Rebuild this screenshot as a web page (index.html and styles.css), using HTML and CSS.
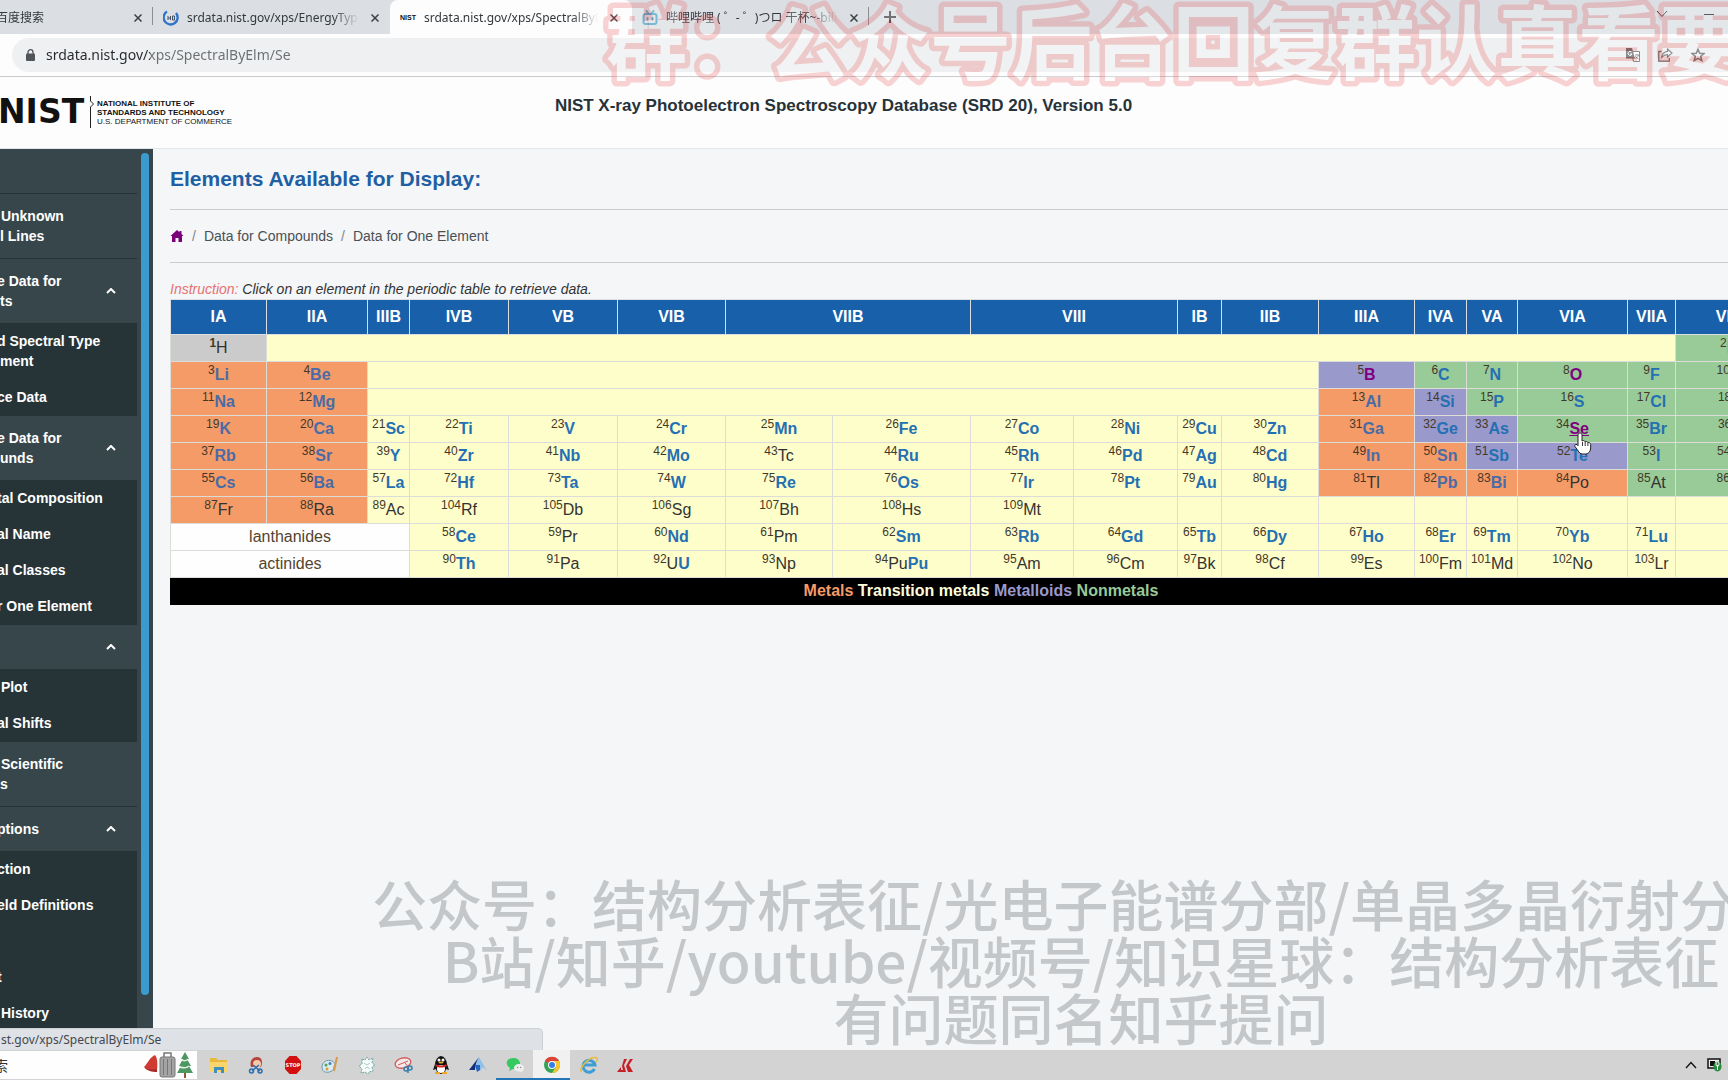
FILE: index.html
```html
<!DOCTYPE html>
<html lang="en">
<head>
<meta charset="utf-8">
<title>NIST X-ray Photoelectron Spectroscopy Database</title>
<link rel="stylesheet" href="styles.css">
</head>
<body>
<div class="tabs">
  <div class="tab tab-first"><button class="tab-title">百度搜索</button><button class="close" aria-label="Close tab"><svg viewBox="0 0 8 8"><path d="M0.5 0.5l7 7M7.5 0.5l-7 7"/></svg></button></div>
  <div class="tab"><svg class="favicon" viewBox="0 0 16 16"><path d="M4 1.5A7 7 0 1 0 13 3" fill="none" stroke="#2f74c8" stroke-width="2.4"/><path d="M5 6v4M5 8h2M7.500 6v4M9.500 6v4h2v-4h-2" fill="none" stroke="#44536a"/></svg><button class="tab-title">srdata.nist.gov/xps/EnergyType</button><button class="close" aria-label="Close tab"><svg viewBox="0 0 8 8"><path d="M0.5 0.5l7 7M7.5 0.5l-7 7"/></svg></button></div>
  <div class="tab active"><span class="favicon mini">NIST</span><button class="tab-title">srdata.nist.gov/xps/SpectralByElm</button><button class="close" aria-label="Close tab"><svg viewBox="0 0 8 8"><path d="M0.5 0.5l7 7M7.5 0.5l-7 7"/></svg></button></div>
  <div class="tab last"><svg class="favicon" viewBox="0 0 16 16"><g fill="none" stroke="#4ba3c7" stroke-width="2" stroke-linecap="round"><rect x="1.500" y="4" width="13" height="10" rx="2"/><path d="M4.500 1l2 2.500M11.500 1l-2 2.500M5.500 8v1.500M10.500 8v1.500"/></g></svg><button class="tab-title">哔哩哔哩 ( ゜- ゜)つロ 干杯~-bili</button><button class="close" aria-label="Close tab"><svg viewBox="0 0 8 8"><path d="M0.5 0.5l7 7M7.5 0.5l-7 7"/></svg></button></div>
  <button class="new-tab" aria-label="New tab"><svg width="12" height="12" viewBox="0 0 12 12"><path d="M6 0v12M0 6h12" stroke="#444" stroke-width="2"/></svg></button>
  <div class="window-controls">
    <button aria-label="Search tabs"><svg width="12" height="8" viewBox="0 0 12 8"><path d="M1 1l5 5.500L11 1" fill="none" stroke="#333"/></svg></button>
    <button aria-label="Minimize"><svg width="10" height="8" viewBox="0 0 10 8"><path d="M0 4.500h10" stroke="#222"/></svg></button>
  </div>
</div>
<div class="toolbar">
  <div class="omnibox">
    <svg width="9" height="12" viewBox="0 0 9 12"><rect y="4.500" width="9" height="7.500" rx="1" fill="#50555a"/><path d="M2 5V3.200a2.500 2.500 0 0 1 5 0V5" fill="none" stroke="#50555a" stroke-width="1.300"/></svg>
    <input class="address" aria-label="Address" value="srdata.nist.gov/xps/SpectralByElm/Se">
    <div class="page-actions">
      <button aria-label="Translate"><svg width="14" height="14" viewBox="0 0 14 14"><path d="M5.500 3.500h8v10h-6z" fill="#fff" stroke="#666"/><path d="M0 0h6l3 10.500H0z" fill="#666"/><path d="M5.500 4A2 2 0 1 0 6 6H4" fill="none" stroke="#fff"/><path d="M9 7h4M11 6v1M12.500 7c-.5 2-2 3-3 3.500M9.500 8c.5 1.500 2 2.500 3 3" fill="none" stroke="#666" stroke-width=".8"/></svg></button>
      <button aria-label="Share"><svg width="15" height="14" viewBox="0 0 15 14"><path d="M3.500 3.500H.8v9.700h10.500V10" fill="none" stroke="#666" stroke-width="1.300"/><path d="M9.500 1l4.500 4-4.500 4V6.600C6.500 6.500 5 7.700 3.500 9.500 4 6 6 3.800 9.500 3.400z" fill="none" stroke="#666" stroke-width="1.100"/></svg></button>
      <button aria-label="Bookmark"><svg width="14" height="14" viewBox="0 0 14 14"><path d="M7 1.200l1.700 4 4.300.3-3.300 2.800 1.100 4.300L7 10.300l-3.800 2.300 1.100-4.300L1 5.500l4.300-.3z" fill="none" stroke="#666" stroke-width="1.500"/></svg></button>
    </div>
  </div>
</div>
<header class="site-header">
  <a class="logo" href="#"><span class="wordmark">NIST</span><svg width="6" height="32" viewBox="0 0 6 32"><path d="M1.500 0v5l3 3-3 3v21" fill="none" stroke="#222"/></svg><span class="agency"><b>NATIONAL INSTITUTE OF</b><b>STANDARDS AND TECHNOLOGY</b><span>U.S. DEPARTMENT OF COMMERCE</span></span></a>
  <h1>NIST X-ray Photoelectron Spectroscopy Database (SRD 20), Version 5.0</h1>
</header>
<div class="page">
  <aside class="sidebar">
    <nav class="menu">
      <a class="item" href="#">&nbsp;</a>
      <a class="item" href="#">&nbsp;Unknown<br>l Lines</a>
      <button class="item group"><span>e Data for<br>ts</span><svg viewBox="0 0 10 6"><path d="M1 5l4-4 4 4"/></svg></button>
      <div class="sub"><a href="#">d Spectral Type<br>ment</a><a href="#">ce Data</a></div>
      <button class="item group"><span>e Data for<br>unds</span><svg viewBox="0 0 10 6"><path d="M1 5l4-4 4 4"/></svg></button>
      <div class="sub"><a href="#">tal Composition</a><a href="#">al Name</a><a href="#">al Classes</a><a href="#">r One Element</a></div>
      <button class="item group"><span>&nbsp;</span><svg viewBox="0 0 10 6"><path d="M1 5l4-4 4 4"/></svg></button>
      <div class="sub"><a href="#">&nbsp;Plot</a><a href="#">al Shifts</a></div>
      <a class="item" href="#">&nbsp;Scientific<br>s</a>
      <button class="item group"><span>ptions</span><svg viewBox="0 0 10 6"><path d="M1 5l4-4 4 4"/></svg></button>
      <div class="sub"><a href="#">ction</a><a href="#">eld Definitions</a><a href="#">&nbsp;</a><a href="#">t</a><a href="#">&nbsp;History</a></div>
    </nav>
    <div class="thumb"></div>
  </aside>
  <main class="content">
    <h2>Elements Available for Display:</h2>
    <nav class="breadcrumb" aria-label="Breadcrumb"><a href="#" aria-label="Home"><svg width="14" height="12" viewBox="0 0 13 12"><path d="M6.500 0L0 6h1.500v6h3.500V8h3v4h3.500V6H13l-2-1.900V1H9v1.300z" fill="#7a007a"/></svg></a><i>/</i><a href="#">Data for Compounds</a><i>/</i><a href="#">Data for One Element</a></nav>
    <p class="instruction"><span>Instruction:</span> Click on an element in the periodic table to retrieve data.</p>
    <table class="elements">
      <colgroup><col class="c96"><col class="c101"><col class="c42"><col class="c99"><col class="c109"><col class="c108"><col class="c107"><col class="c138"><col class="c103"><col class="c104"><col class="c44"><col class="c97"><col class="c96"><col class="c52"><col class="c51"><col class="c110"><col class="c48"><col class="c116"></colgroup>
      <thead><tr><th>IA</th><th>IIA</th><th>IIIB</th><th>IVB</th><th>VB</th><th>VIB</th><th colspan="2">VIIB</th><th colspan="2">VIII</th><th>IB</th><th>IIB</th><th>IIIA</th><th>IVA</th><th>VA</th><th>VIA</th><th>VIIA</th><th>VIIIA</th></tr></thead>
      <tbody>
      <tr><td class="h"><sup><b>1</b></sup>H</td><td colspan="16"></td><td class="n"><sup>2</sup>He</td></tr>
      <tr><td class="m"><sup>3</sup><a href="#">Li</a></td><td class="m"><sup>4</sup><a href="#">Be</a></td><td colspan="10"></td><td class="d"><sup>5</sup><a class="seen" href="#">B</a></td><td class="n"><sup>6</sup><a href="#">C</a></td><td class="n"><sup>7</sup><a href="#">N</a></td><td class="n"><sup>8</sup><a class="seen" href="#">O</a></td><td class="n"><sup>9</sup><a href="#">F</a></td><td class="n"><sup>10</sup><a href="#">Ne</a></td></tr>
      <tr><td class="m"><sup>11</sup><a href="#">Na</a></td><td class="m"><sup>12</sup><a href="#">Mg</a></td><td colspan="10"></td><td class="m"><sup>13</sup><a href="#">Al</a></td><td class="d"><sup>14</sup><a href="#">Si</a></td><td class="n"><sup>15</sup><a href="#">P</a></td><td class="n"><sup>16</sup><a href="#">S</a></td><td class="n"><sup>17</sup><a href="#">Cl</a></td><td class="n"><sup>18</sup><a href="#">Ar</a></td></tr>
      <tr><td class="m"><sup>19</sup><a href="#">K</a></td><td class="m"><sup>20</sup><a href="#">Ca</a></td><td><sup>21</sup><a href="#">Sc</a></td><td><sup>22</sup><a href="#">Ti</a></td><td><sup>23</sup><a href="#">V</a></td><td><sup>24</sup><a href="#">Cr</a></td><td><sup>25</sup><a href="#">Mn</a></td><td><sup>26</sup><a href="#">Fe</a></td><td><sup>27</sup><a href="#">Co</a></td><td><sup>28</sup><a href="#">Ni</a></td><td><sup>29</sup><a href="#">Cu</a></td><td><sup>30</sup><a href="#">Zn</a></td><td class="m"><sup>31</sup><a href="#">Ga</a></td><td class="d"><sup>32</sup><a href="#">Ge</a></td><td class="d"><sup>33</sup><a href="#">As</a></td><td class="n hovered"><sup>34</sup><a class="seen under" href="#">Se</a><svg class="pointer" width="18" height="24" viewBox="0 0 18 24"><path d="M6 2c1.300 0 2 .8 2 2v6c1-.8 2.500-.5 3 .7 1-.5 2.300-.2 2.700.9 1.300-.4 3 .3 3 2V17c0 3-2 6-5 6H8.500c-2.200 0-3.500-1.500-4.500-3.300L1 15.500c-.8-1.500.8-2.900 2-1.800l1 1V4c0-1.200.7-2 2-2z" fill="#fff" stroke="#222"/><path d="M8.500 11v4M11.200 11v4M13.900 12v3" stroke="#222" stroke-width=".9"/></svg></td><td class="n"><sup>35</sup><a href="#">Br</a></td><td class="n"><sup>36</sup><a href="#">Kr</a></td></tr>
      <tr><td class="m"><sup>37</sup><a href="#">Rb</a></td><td class="m"><sup>38</sup><a href="#">Sr</a></td><td><sup>39</sup><a href="#">Y</a></td><td><sup>40</sup><a href="#">Zr</a></td><td><sup>41</sup><a href="#">Nb</a></td><td><sup>42</sup><a href="#">Mo</a></td><td><sup>43</sup>Tc</td><td><sup>44</sup><a href="#">Ru</a></td><td><sup>45</sup><a href="#">Rh</a></td><td><sup>46</sup><a href="#">Pd</a></td><td><sup>47</sup><a href="#">Ag</a></td><td><sup>48</sup><a href="#">Cd</a></td><td class="m"><sup>49</sup><a href="#">In</a></td><td class="m"><sup>50</sup><a href="#">Sn</a></td><td class="d"><sup>51</sup><a href="#">Sb</a></td><td class="d"><sup>52</sup><a href="#">Te</a></td><td class="n"><sup>53</sup><a href="#">I</a></td><td class="n"><sup>54</sup><a href="#">Xe</a></td></tr>
      <tr><td class="m"><sup>55</sup><a href="#">Cs</a></td><td class="m"><sup>56</sup><a href="#">Ba</a></td><td><sup>57</sup><a href="#">La</a></td><td><sup>72</sup><a href="#">Hf</a></td><td><sup>73</sup><a href="#">Ta</a></td><td><sup>74</sup><a href="#">W</a></td><td><sup>75</sup><a href="#">Re</a></td><td><sup>76</sup><a href="#">Os</a></td><td><sup>77</sup><a href="#">Ir</a></td><td><sup>78</sup><a href="#">Pt</a></td><td><sup>79</sup><a href="#">Au</a></td><td><sup>80</sup><a href="#">Hg</a></td><td class="m"><sup>81</sup>Tl</td><td class="m"><sup>82</sup><a href="#">Pb</a></td><td class="m"><sup>83</sup><a href="#">Bi</a></td><td class="m"><sup>84</sup>Po</td><td class="n"><sup>85</sup>At</td><td class="n"><sup>86</sup>Rn</td></tr>
      <tr><td class="m"><sup>87</sup>Fr</td><td class="m"><sup>88</sup>Ra</td><td><sup>89</sup>Ac</td><td><sup>104</sup>Rf</td><td><sup>105</sup>Db</td><td><sup>106</sup>Sg</td><td><sup>107</sup>Bh</td><td><sup>108</sup>Hs</td><td><sup>109</sup>Mt</td><td></td><td></td><td></td><td></td><td></td><td></td><td></td><td></td><td></td></tr>
      <tr><td class="label" colspan="3">lanthanides</td><td><sup>58</sup><a href="#">Ce</a></td><td><sup>59</sup>Pr</td><td><sup>60</sup><a href="#">Nd</a></td><td><sup>61</sup>Pm</td><td><sup>62</sup><a href="#">Sm</a></td><td><sup>63</sup><a href="#">Rb</a></td><td><sup>64</sup><a href="#">Gd</a></td><td><sup>65</sup><a href="#">Tb</a></td><td><sup>66</sup><a href="#">Dy</a></td><td><sup>67</sup><a href="#">Ho</a></td><td><sup>68</sup><a href="#">Er</a></td><td><sup>69</sup><a href="#">Tm</a></td><td><sup>70</sup><a href="#">Yb</a></td><td><sup>71</sup><a href="#">Lu</a></td><td></td></tr>
      <tr><td class="label" colspan="3">actinides</td><td><sup>90</sup><a href="#">Th</a></td><td><sup>91</sup>Pa</td><td><sup>92</sup>U<a href="#">U</a></td><td><sup>93</sup>Np</td><td><sup>94</sup>Pu<a href="#">Pu</a></td><td><sup>95</sup>Am</td><td><sup>96</sup>Cm</td><td><sup>97</sup>Bk</td><td><sup>98</sup>Cf</td><td><sup>99</sup>Es</td><td><sup>100</sup>Fm</td><td><sup>101</sup>Md</td><td><sup>102</sup>No</td><td><sup>103</sup>Lr</td><td></td></tr>
      </tbody>
      <tfoot><tr><td colspan="18"><span class="metal">Metals</span> <span class="transition">Transition metals</span> <span class="metalloid">Metalloids</span> <span class="nonmetal">Nonmetals</span></td></tr></tfoot>
    </table>
  </main>
  <div class="status">st.gov/xps/SpectralByElm/Se</div>
</div>
<footer class="taskbar">
  <div class="search"><input aria-label="Search" value="索"><svg width="50" height="28" viewBox="0 0 50 28"><path d="M1 16C5 12 7 6 12 4c2 2 3 8 2 15C9 20 4 20 1 16z" fill="#cf3a32"/><path d="M1 16c3 3 8 3 13 2v3c-5 0-10-1-13-5z" fill="#a52a26"/><path d="M21 7V2h7v5" fill="none" stroke="#777" stroke-width="1.500"/><rect x="17" y="6" width="15" height="20" rx="2" fill="#a4a4a4" stroke="#777"/><path d="M20.500 8v16M24.500 8v16M28.500 8v16" stroke="#777"/><path d="M42 1l4 7h-2l4 7h-2l4 7H34l4-7h-2l4-7h-2z" fill="#4b9860"/><path d="M39 9c2 1 5 1 6-1M37 16c3 1 7 1 9-1" fill="none" stroke="#e5eee7" stroke-width="1.500"/><path d="M42 22v5" stroke="#8a5a36" stroke-width="2"/></svg></div>
  <div class="apps">
    <button aria-label="Files"><svg viewBox="0 0 20 18"><path d="M1 2h6l2 2h9v12H1z" fill="#e9b93b"/><path d="M1 6h17v10H1z" fill="#f8d66d"/><path d="M5 17v-6h10v6h-3v-3H8v3z" fill="#3f8fc0"/></svg></button>
    <button aria-label="Screen clip"><svg viewBox="0 0 20 18"><path d="M5 11C3 5 7 1 11 1c5 0 6 5 4 10z" fill="#b5443a"/><circle cx="11" cy="8" r="4" fill="#f2c9aa"/><path d="M7 9l7 6M13 9l-7 6" stroke="#2b6fae" stroke-width="1.500"/><g fill="none" stroke="#2b6fae" stroke-width="1.500"><circle cx="5.500" cy="15" r="2"/><circle cx="14" cy="15" r="2"/></g></svg></button>
    <button aria-label="Stop"><svg viewBox="0 0 20 18"><path d="M6.500 0h7L18 5v8l-4.500 5h-7L2 13V5z" fill="#d3100f"/><text x="10" y="11" text-anchor="middle" class="stop">STOP</text></svg></button>
    <button aria-label="Paint"><svg viewBox="0 0 20 18"><path d="M2 11c0-5 5-8 10-6 4 2 2 5 2 6 0 4-5 6-9 5-2-1-3-2-3-5z" fill="#d8eaf2" stroke="#6c98ac"/><circle cx="6" cy="9" r="1.500" fill="#51a44c"/><circle cx="10" cy="7.500" r="1.500" fill="#4a79c9"/><circle cx="7" cy="13" r="1.500" fill="#e19b37"/><path d="M17 1l-3 14" stroke="#d99a4d" stroke-width="2"/></svg></button>
    <button aria-label="Origin"><svg viewBox="0 0 20 18"><path d="M5 3l3 1 2-3 2 3 4-2-1 5 3 2-3 2 1 4-4 1-1 2-3-2-4 1 1-4-3-3 3-2z" fill="#f6fbf9" stroke="#65a69d" stroke-dasharray="2 1"/><path d="M7 7l3 2 3-2M8 13l2-2 3 2" fill="none" stroke="#a9cfc9"/></svg></button>
    <button aria-label="Snipping tool"><svg viewBox="0 0 20 18"><ellipse cx="9" cy="7" rx="8" ry="5" fill="#f5e8e8" stroke="#cf5b5b" stroke-width="1.300" transform="rotate(-15 9 7)"/><path d="M4 9l10-4M11 7l4 5" stroke="#cf5b5b"/><g fill="none" stroke="#397fae" stroke-width="1.500"><circle cx="12" cy="13" r="2"/><circle cx="16" cy="12" r="2"/><path d="M14 10v7"/></g></svg></button>
    <button aria-label="QQ"><svg viewBox="0 0 20 18"><ellipse cx="10" cy="9" rx="6" ry="9" fill="#111"/><path d="M4 8l-2 6 3-1zM16 8l2 6-3-1z" fill="#111"/><ellipse cx="10" cy="13" rx="4" ry="4" fill="#fff"/><circle cx="8" cy="4" r="1.500" fill="#fff"/><circle cx="12" cy="4" r="1.500" fill="#fff"/><path d="M4.500 8c3 2 8 2 11 0v2c-3 2-8 2-11 0z" fill="#d62727"/><ellipse cx="10" cy="6.500" rx="2.500" ry="1" fill="#efa72a"/><path d="M4 17h5M11 17h5" stroke="#efa72a" stroke-width="2"/></svg></button>
    <button aria-label="Avantage"><svg viewBox="0 0 20 18"><path d="M11 1L1 14h6c0-5 2-9 4-13z" fill="#12307f"/><path d="M11 1c-2 4-4 8-3 11l4 3 3-4 4 4z" fill="#8fc0ea"/><path d="M7 9h5v5l-3 2z" fill="#2363bd"/></svg></button>
    <button class="open" aria-label="WeChat"><svg viewBox="0 0 20 18"><path d="M8 2c4 0 7 2 7 5.500S12 13 8 13l-4 2 1-3C-1 8 2 2 8 2z" fill="#35c95f"/><path d="M14 8c3 0 5 2 5 4s-1 3-2 3l.5 2-2-1.500C11 16 9 14 9 12s2-4 5-4z" fill="#eee"/><circle cx="12.500" cy="11.500" r=".7" fill="#888"/><circle cx="15.500" cy="11.500" r=".7" fill="#888"/></svg></button>
    <button class="open current" aria-label="Chrome"><svg viewBox="0 0 20 18"><circle cx="10" cy="9" r="8" fill="#35a354"/><path d="M10 9L3 5a8 8 0 0 1 14 0z" fill="#df4335"/><path d="M17 5a8 8 0 0 1-7 12l4-6-4-6z" fill="#f7c52c"/><circle cx="10" cy="9" r="4" fill="#fff"/><circle cx="10" cy="9" r="3" fill="#397ee6"/></svg></button>
    <button aria-label="Internet Explorer"><svg viewBox="0 0 20 18"><path d="M15.500 13a6 6 0 1 1 .5-4H5" fill="none" stroke="#3c9ed5" stroke-width="3"/><path d="M2 16C1 10 12-1 18 2c1 1 0 3-1 4" fill="none" stroke="#e9bd3c" stroke-width="1.500"/></svg></button>
    <button aria-label="CasaXPS"><svg viewBox="0 0 20 18"><path d="M8 3h3L8 9l2 7H1l4-5v3h2l-1-4zM14 3h3l-4 6 4 7h-5l-2-6z" fill="#c51f27"/></svg></button>
  </div>
  <div class="tray"><button aria-label="Show hidden icons"><svg width="12" height="8" viewBox="0 0 12 8"><path d="M1 7l5-5.500L11 7" fill="none" stroke="#111" stroke-width="1.300"/></svg></button><svg width="15" height="14" viewBox="0 0 15 14"><path d="M1 1h12v9H1z" fill="#eee" stroke="#111" stroke-width="1.500"/><path d="M3 3h5v5H3z" fill="#111"/><ellipse cx="10.500" cy="8.500" rx="4" ry="5" fill="#268c3d"/><path d="M10.500 12V7M9 6c0 3 3 3 3 0s-3-3-3 0z" fill="none" stroke="#fff"/></svg></div>
</footer>
<svg class="mark mark-top" height="100"><text x="0" y="73">群：公众号后台回复群认真看要</text></svg>
<div class="mark mark-bottom">公众号：结构分析表征/光电子能谱分部/单晶多晶衍射分部<br>B站/知乎/youtube/视频号/知识星球：结构分析表征<br>有问题同名知乎提问</div>
</body>
</html>
```
FILE: styles.css
```css
* { box-sizing: border-box; }
body { margin: 0; height: 100vh; position: relative; display: flex; flex-direction: column; overflow: hidden; font-family: "Liberation Sans", sans-serif; font-size: 16px; color: #333; background: #fdfdfd; }
button { border: 0; padding: 0; background: none; font: inherit; color: inherit; display: flex; align-items: center; }
a { color: inherit; text-decoration: none; }
input { border: 0; padding: 0; background: none; outline: 0; font: inherit; }

.tabs { flex: none; height: 34px; display: flex; background: #dbdfe3; font: 12px/16px "Noto Sans", "Noto Sans CJK SC", sans-serif; color: #33383c; }
.tab { width: 237px; height: 34px; display: flex; align-items: center; gap: 8px; padding: 2px 7px 0 10px; position: relative; }
.tab-first { width: 153px; padding-left: 0; }
.tab-first::after, .last::after { content: ""; position: absolute; right: 0; top: 7px; height: 18px; width: 1px; background: #8a8e92; }
.tab.active { width: 242px; padding-right: 10px; background: #fdfdfd; border-radius: 8px 8px 0 0; }
.tab-title { flex: 1; min-width: 0; overflow: hidden; white-space: nowrap; -webkit-mask-image: linear-gradient(90deg, #000 85%, transparent); mask-image: linear-gradient(90deg, #000 85%, transparent); }
.tab-first .tab-title { margin-left: -4px; }
.favicon { width: 16px; height: 16px; flex: none; }
.mini { font: bold 7px/16px "Liberation Sans", sans-serif; color: #111; }
.close { width: 16px; height: 16px; justify-content: center; }
.close svg { width: 8px; height: 8px; fill: none; stroke: #3c4043; stroke-width: 1.5; }
.new-tab { padding: 0 15px; }
.window-controls { margin-left: auto; display: flex; gap: 36px; padding: 0 14px 6px 0; }

.toolbar { flex: none; height: 43px; padding: 4px 0 4px 12px; background: #fdfdfd; border-bottom: 1px solid #c9ccce; }
.omnibox { height: 34px; display: flex; align-items: center; gap: 11px; padding: 0 23px 0 14px; border-radius: 17px 0 0 17px; background: #eef0f1; }
.address { flex: 1; font: 14px/20px "Noto Sans", sans-serif; color: transparent; background: linear-gradient(90deg, #24282c 104px, #6a6f74 104px); -webkit-background-clip: text; background-clip: text; }
.page-actions { display: flex; gap: 18px; }

.site-header { flex: none; height: 72px; display: grid; grid-template-columns: 1fr auto 1fr; align-items: start; background: #fdfdfd; border-bottom: 1px solid #e3e6ea; }
.site-header h1 { margin: 0 41px 0 0; padding-top: 19px; font-size: 17px; line-height: 20px; color: #263238; }
.logo { display: flex; align-items: center; gap: 2px; padding-top: 18px; color: #111; height: 52px; }
.wordmark { font: bold 33px/32px "DejaVu Sans", sans-serif; width: 87px; text-indent: -2px; }
.agency { display: flex; flex-direction: column; font-size: 8px; line-height: 9px; white-space: nowrap; }

.page { flex: 1; min-height: 0; display: grid; grid-template-columns: 153px minmax(0, 1fr); grid-template-rows: minmax(0, 1fr); position: relative; overflow: hidden; }
.sidebar { display: flex; gap: 4px; overflow: hidden; background: #37464b; color: #fff; }
.menu { width: 137px; font-size: 14px; font-weight: bold; line-height: 20px; overflow: hidden; white-space: nowrap; }
.item { display: flex; align-items: center; width: 100%; padding: 12px 0; border-bottom: 1px solid #263238; text-align: left; text-indent: -3px; }
a.item { display: block; }
.group { justify-content: space-between; padding-right: 21px; border-bottom: 0; }
.group svg, .group path { fill: none; stroke: #fff; stroke-width: 2; }
.group svg { width: 10px; height: 6px; }
.sub { background: #263438; border-bottom: 1px solid #263438; }
.sub a { display: block; padding: 8px 0; text-indent: -3px; }
.thumb { width: 8px; height: 842px; max-height: 94%; margin-top: 4px; border-radius: 4px; background: #3b9bcf; }

.content { background: #f4f6f8; padding: 0 0 0 17px; overflow: hidden; }
.content h2 { margin: 0; padding: 16px 0 17px; font-size: 21px; line-height: 27px; color: #1f5fa4; border-bottom: 1px solid #c9ccd0; }
.breadcrumb { display: flex; align-items: center; gap: 8px; height: 53px; border-bottom: 1px solid #c9ccd0; font-size: 14px; color: #4b5055; }
.breadcrumb i { font-style: normal; color: #80868b; }
.breadcrumb a { display: flex; }
.instruction { margin: 0; padding: 16px 0 0; font-size: 14px; line-height: 20px; font-style: italic; }
.instruction span { color: #e57373; }

.elements { table-layout: fixed; width: 1621px; border-collapse: collapse; text-align: center; line-height: 24px; background: #fefecb; }
.elements th { height: 35px; padding: 0; color: #fff; background: #1860aa; border: 1px solid #dcdfe2; }
.elements td { height: 27px; padding: 0; border: 1px solid #dcdcd8; white-space: nowrap; color: #333; }
.elements sup { font-size: 12px; line-height: 0; position: relative; top: -6px; vertical-align: baseline; color: #433828; }
.elements td a { color: #2470b3; font-weight: bold; }
.elements td a.seen { color: #800080; }
.elements td a.under { text-decoration: underline; }
.elements .h { background: #cbcbcb; }
.elements .m { background: #f59b68; }
.elements .m a { color: #4a6ba6; }
.elements .d { background: #9a99cc; }
.elements .n { background: #98cb98; }
.elements .label { background: #fefefe; color: #54442f; }
.elements tfoot td { background: #000; font-weight: bold; border-color: #000; color: #fff; }
.elements .metal { color: #f59b68; }
.elements .transition { color: #fefedc; }
.elements .metalloid { color: #9a99cc; }
.elements .nonmetal { color: #98cb98; }
.hovered { position: relative; }
.pointer { position: absolute; left: 56px; top: 15px; z-index: 2; }
.c42 { width: 42px; } .c44 { width: 44px; } .c48 { width: 48px; } .c51 { width: 51px; } .c52 { width: 52px; }
.c96 { width: 96px; } .c97 { width: 97px; } .c99 { width: 99px; } .c101 { width: 101px; } .c103 { width: 103px; }
.c104 { width: 104px; } .c107 { width: 107px; } .c108 { width: 108px; } .c109 { width: 109px; } .c110 { width: 110px; }
.c116 { width: 116px; } .c138 { width: 138px; }

.status { position: absolute; left: 0; bottom: 0; width: 543px; height: 22px; padding-left: 1px; border: solid #cdd0d4; border-width: 1px 1px 0 0; border-radius: 0 5px 0 0; background: #dee1e6; color: #44484c; font: 12px/21px "Noto Sans", sans-serif; }

.taskbar { flex: none; height: 30px; display: flex; align-items: stretch; background: #d3d3d3; }
.search { width: 197px; display: flex; align-items: center; justify-content: space-between; margin: 1px 3px 1px 0; padding-right: 4px; background: #fefefe; overflow: hidden; }
.search input { width: 60px; text-indent: -6px; font: 14px/20px "Noto Sans CJK SC", sans-serif; color: #333; }
.apps { display: flex; }
.apps button { width: 37px; justify-content: center; }
.apps svg { width: 20px; height: 18px; }
.apps .open { box-shadow: inset 0 -2px #2474b8; }
.apps .current { background: #f1f1f1; }
.stop { font: bold 5px "DejaVu Sans", sans-serif; fill: #fff; }
.tray { margin-left: auto; display: flex; align-items: center; gap: 10px; padding-right: 6px; }

.mark { position: absolute; pointer-events: none; white-space: nowrap; font-family: "Noto Sans CJK SC", sans-serif; }
.mark-top { left: 606px; right: 0; top: 0; width: calc(100% - 606px); overflow: visible; font-size: 81px; font-weight: bold; fill: #fff; opacity: .25; stroke: #eb5757; stroke-width: 11px; paint-order: stroke fill; stroke-linejoin: round; }
.mark-bottom { left: 367px; width: 1428px; top: 874px; font-size: 55px; line-height: 57px; font-weight: 500; text-align: center; color: #c4c7c9; }
```
